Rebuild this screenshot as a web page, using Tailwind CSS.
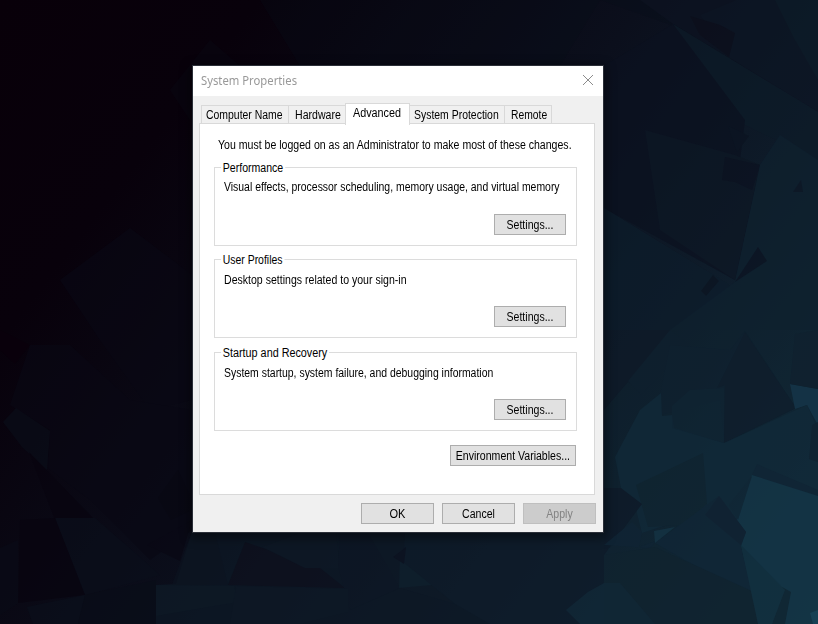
<!DOCTYPE html>
<html lang="en">
<head>
  <meta charset="UTF-8" />
  <meta name="viewport" content="width=device-width, initial-scale=1.0" />
  <title>System Properties</title>
  <script src="https://cdn.jsdelivr.net/npm/@tailwindcss/browser@4"></script>
</head>
<body class="relative w-[818px] h-[624px] overflow-hidden bg-[#0a0d19] font-['Liberation_Sans',sans-serif] text-[12px] leading-[14px] text-black">

  <!-- === WALLPAPER === -->
  <svg class="absolute inset-0" width="818" height="624" viewBox="0 0 818 624">
    <defs>
      <linearGradient id="base" x1="0" y1="0" x2="818" y2="624" gradientUnits="userSpaceOnUse">
        <stop offset="0" stop-color="#080009" />
        <stop offset="0.2" stop-color="#08010b" />
        <stop offset="0.5" stop-color="#0b0f1c" />
        <stop offset="0.7" stop-color="#0e1b29" />
        <stop offset="1" stop-color="#123040" />
      </linearGradient>
    </defs>
    <rect width="818" height="624" fill="url(#base)" />
    <!-- top right -->
    <g opacity="0.7">
      <path d="M260 0H818V110L668 24L600 0L560 66H300Z" fill="#0b0e1b" opacity="0.4" />
      <path d="M673 24L818 112V0H640Z" fill="#0d1421" />
      <path d="M700 15L736 0H775L795 30L818 80V112L730 58Z" fill="#0e1624" />
      <path d="M775 0H818V80L795 40Z" fill="#0e1c29" />
      <path d="M690 16L720 25L735 33L729 57L700 35Z" fill="#0d0f1c" />
      <path d="M673 24L818 112V160L745 125L700 85Z" fill="#0e1c29" />
      <path d="M604 66L673 24L745 120L740 160L760 165L735 280L604 208Z" fill="#0c1220" />
      <path d="M645 130L735 155L760 165L735 280L660 230Z" fill="#0e1724" />
      <path d="M725 157L760 165L752 190L735 182L722 180Z" fill="#0c1220" />
      <path d="M728 126L749 136L737 152Z" fill="#0c1421" />
      <path d="M604 208L728 284L742 305L700 330L604 330Z" fill="#0e1e2c" />
      <path d="M760 165L780 135L818 160V330H670L735 282Z" fill="#0f212f" />
      <path d="M735 282L758 247L767 261Z" fill="#0c1421" />
      <path d="M701 291L713 275L719 281L706 296Z" fill="#0c1522" />
      <path d="M793 192L801 180L803 192Z" fill="#0d1825" />
    </g>
    <!-- right middle and bottom right -->
    <g opacity="0.85">
      <path d="M604 330H818V624H604Z" fill="#10232f" opacity="0.5" />
      <path d="M604 330H670L642 390L628 382L604 410Z" fill="#0e1a28" />
      <path d="M628 381L670 330L690 345L641 395Z" fill="#0f202e" />
      <path d="M670 345L730 350L745 331L796 408L724 443L720 400L660 415V395Z" fill="#0f212f" />
      <path d="M745 332L796 408L724 443L725 385L717 388Z" fill="#0f1e2c" />
      <path d="M790 384L818 389V425L807 405L795 409Z" fill="#153548" />
      <path d="M795 334L818 330V389L790 384Z" fill="#10212f" />
      <path d="M615 457L640 410L661 393L662 416L672 415L674 428L724 443L807 405L818 430V500L750 525L700 514L642 533L635 505L621 488Z" fill="#112938" />
      <path d="M690 390L724 388L724 443L672 428L672 406Z" fill="#112636" opacity="0.6" />
      <path d="M636 485L703 453L707 504L682 525L648 527Z" fill="#102531" />
      <path d="M812 425L818 422V462L809 459Z" fill="#102331" />
      <path d="M757 464L818 490V500L752 475Z" fill="#102535" />
      <path d="M752 475L818 496V624H758L741 545L736 522Z" fill="#143546" />
      <path d="M752 476L729 505L738 520Z" fill="#102736" />
      <path d="M655 543L719 496L746 532L741 546L754 600L720 580Z" fill="#102636" />
      <path d="M719 496L746 532L741 545L705 515Z" fill="#102232" />
      <path d="M604 488L621 488L642 504L604 555Z" fill="#0e1b29" />
      <path d="M632 522L642 532L639 547L656 541L650 548L604 545Z" fill="#102434" />
      <path d="M654 531L675 527L655 543Z" fill="#143343" />
      <path d="M604 555L655 547L754 592L758 624H604Z" fill="#10232f" />
      <path d="M782 587L791 592L785 624H772Z" fill="#102633" />
      <path d="M741 545L785 590L772 624H758Z" fill="#12303f" />
      <path d="M810 613L818 610V624H813Z" fill="#184558" />
    </g>
    <!-- bottom strip -->
    <g opacity="0.75">
      <path d="M192 532H604V624H156V585L176 584Z" fill="#0d1825" />
      <path d="M245 542L320 568L345 588L228 585Z" fill="#0e111e" />
      <path d="M262 547L300 533H336L340 568H305Z" fill="#0e1926" />
      <path d="M340 533H398L400 588L350 610L338 566Z" fill="#0d1725" />
      <path d="M368 533H400L455 604L400 588Z" fill="#0e1926" />
      <path d="M400 556L432 585L399 588Z" fill="#0f202d" />
      <path d="M405 533H604V624H490L455 604L403 562Z" fill="#0e1b29" />
      <path d="M393 557L406 547L404 564Z" fill="#0c1220" />
      <path d="M156 585L234 586L238 602L156 616Z" fill="#0e1b27" />
      <path d="M236 586L348 589V612L300 624H230Z" fill="#0e1926" />
      <path d="M566 610L588 592L604 583H620L655 624H580Z" fill="#112736" />
    </g>
    <!-- left side -->
    <g opacity="0.65">
      <path d="M210 40L240 66H190V120L170 90Z" fill="#090611" />
      <path d="M60 280L130 228L192 275V400L150 410L100 340Z" fill="#090814" />
      <path d="M0 330L30 345L15 364L0 350Z" fill="#0a000b" />
      <path d="M30 345L70 345L130 400L192 410V530L150 560L90 500L48 468L50 430L10 405Z" fill="#090814" />
      <path d="M3 422L16 408L50 431L47 470L22 447Z" fill="#0a0e19" />
      <path d="M29 452L95 520L55 520Z" fill="#08040f" />
      <path d="M55 518L95 518L160 575L85 595Z" fill="#0a0f1b" />
      <path d="M20 520L55 518L85 595L18 603Z" fill="#08040f" />
      <path d="M0 548L18 540V603L0 615Z" fill="#090b17" />
      <path d="M158 498L178 470L192 500V510L171 520Z" fill="#080711" />
      <path d="M147 545L192 520L180 561Z" fill="#090713" />
      <path d="M192 532L215 532L228 585H172Z" fill="#0c1420" />
      <path d="M27 607L85 595L78 624H33Z" fill="#0a101c" />
      <path d="M85 595L156 580V624H78Z" fill="#090d18" />
    </g>
  </svg>

  <!-- === DIALOG WINDOW === -->
  <div class="absolute left-[192px] top-[65px] w-[412px] h-[468px] border border-[#2b2f38] bg-[#f0f0f0] shadow-[0_3px_10px_2px_rgba(0,0,0,0.45)]">

    <!-- Title bar -->
    <div class="flex h-[30px] items-center justify-between bg-white pl-2 pr-[9px]">
      <h1 class="origin-left scale-x-94 font-['Noto_Sans',sans-serif] text-[12px] leading-[16px] text-[#999999]">System Properties</h1>
      <svg class="-mt-[2px]" width="12" height="12" viewBox="0 0 12 12" fill="none" stroke="#8c8c8c" stroke-width="1">
        <path d="M1 1L11 11M11 1L1 11" />
      </svg>
    </div>

    <!-- Tabs (labels are narrowed to the dialog font's width) -->
    <div class="relative z-10 flex h-[28px] items-end pl-2 whitespace-nowrap">
      <div class="h-[19px] w-[87px] border-l border-t border-[#d9d9d9] pl-[4px] pt-[2px]"><span class="block origin-left scale-x-87">Computer Name</span></div>
      <div class="h-[19px] w-[57px] border-l border-t border-[#d9d9d9] pl-[6px] pt-[2px]"><span class="block origin-left scale-x-88">Hardware</span></div>
      <div class="-mb-px h-[22px] w-[65px] border-x border-t border-[#d9d9d9] bg-white pl-[7px] pt-[2px]"><span class="block origin-left scale-x-90">Advanced</span></div>
      <div class="h-[19px] w-[94px] border-t border-[#d9d9d9] pl-[4px] pt-[2px]"><span class="block origin-left scale-x-87">System Protection</span></div>
      <div class="h-[19px] w-[48px] border-x border-t border-[#d9d9d9] pl-[6px] pt-[2px]"><span class="block origin-left scale-x-86">Remote</span></div>
    </div>

    <!-- Advanced page -->
    <div class="-mt-px ml-[6px] flex h-[372px] w-[396px] flex-col border border-[#d9d9d9] bg-white pl-[14px] pt-[14px] whitespace-nowrap">
      <p class="ml-[4px] w-fit origin-left scale-x-88">You must be logged on as an Administrator to make most of these changes.</p>

      <section class="mt-[15px] h-[79px] w-[363px] border border-[#dcdcdc]">
        <h2 class="-mt-[7px] ml-[6px] w-fit origin-left scale-x-88 bg-white px-[2px]">Performance</h2>
        <p class="mt-[5px] ml-[9px] w-fit origin-left scale-x-87">Visual effects, processor scheduling, memory usage, and virtual memory</p>
        <button class="mt-[20px] ml-[279px] block h-[21px] w-[72px] border border-[#adadad] bg-[#e1e1e1]"><span class="block scale-x-88">Settings...</span></button>
      </section>

      <section class="mt-[13px] h-[79px] w-[363px] border border-[#dcdcdc]">
        <h2 class="-mt-[7px] ml-[6px] w-fit origin-left scale-x-87 bg-white px-[2px]">User Profiles</h2>
        <p class="mt-[6px] ml-[9px] w-fit origin-left scale-x-88">Desktop settings related to your sign-in</p>
        <button class="mt-[19px] ml-[279px] block h-[21px] w-[72px] border border-[#adadad] bg-[#e1e1e1]"><span class="block scale-x-88">Settings...</span></button>
      </section>

      <section class="mt-[14px] h-[79px] w-[363px] border border-[#dcdcdc]">
        <h2 class="-mt-[7px] ml-[6px] w-fit origin-left scale-x-90 bg-white px-[2px]">Startup and Recovery</h2>
        <p class="mt-[6px] ml-[9px] w-fit origin-left scale-x-87">System startup, system failure, and debugging information</p>
        <button class="mt-[19px] ml-[279px] block h-[21px] w-[72px] border border-[#adadad] bg-[#e1e1e1]"><span class="block scale-x-88">Settings...</span></button>
      </section>

      <button class="mt-[14px] ml-[236px] flex h-[21px] w-[126px] items-center justify-center border border-[#adadad] bg-[#e1e1e1]"><span class="scale-x-88">Environment Variables...</span></button>
    </div>

    <!-- Dialog buttons -->
    <div class="mt-2 flex justify-end gap-2 pr-[7px]">
      <button class="h-[21px] w-[73px] border border-[#adadad] bg-[#e1e1e1]"><span class="block scale-x-92">OK</span></button>
      <button class="h-[21px] w-[73px] border border-[#adadad] bg-[#e1e1e1]"><span class="block scale-x-88">Cancel</span></button>
      <button class="h-[21px] w-[73px] border border-[#bfbfbf] bg-[#cccccc] text-[#838383]" disabled><span class="block scale-x-88">Apply</span></button>
    </div>
  </div>

</body>
</html>
